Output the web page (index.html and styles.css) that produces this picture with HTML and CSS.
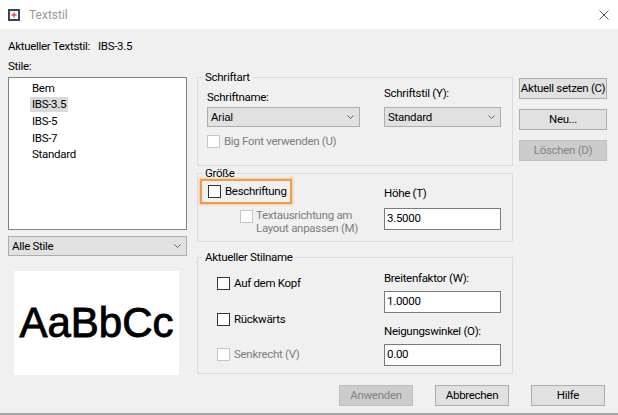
FILE: index.html
```html
<!DOCTYPE html>
<html lang="de">
<head>
<meta charset="utf-8">
<title>Textstil</title>
<link rel="stylesheet" href="styles.css">
</head>
<body>
<div class="titlebar">
  <svg class="appicon" width="12" height="12" viewBox="0 0 12 12"><rect x="1" y="1" width="10" height="10" fill="#fff" stroke="#34465a" stroke-width="2"/><path d="M6 3.5v5M3.5 6h5" stroke="#e2475a" stroke-width="1.4"/></svg>
  <span class="title">Textstil</span>
  <svg class="close" width="10" height="10" viewBox="0 0 10 10"><path d="M0.5 0.5L9.5 9.5M9.5 0.5L0.5 9.5" stroke="#5a5a5a" stroke-width="1"/></svg>
</div>
<div class="client">
  <div class="current"><span class="cur-lbl">Aktueller Textstil:</span><span>IBS-3.5</span></div>
  <div class="main">
    <div class="left">
      <div class="stile-lbl">Stile:</div>
      <div class="list">
        <div class="item"><span>Bem</span></div>
        <div class="item sel"><span>IBS-3.5</span></div>
        <div class="item"><span>IBS-5</span></div>
        <div class="item"><span>IBS-7</span></div>
        <div class="item"><span>Standard</span></div>
      </div>
      <div class="combo all"><span>Alle Stile</span><svg class="chev" width="7" height="4" viewBox="0 0 7 4"><path d="M0.5 0.5L3.5 3.5L6.5 0.5" fill="none" stroke="#606060" stroke-width="1"/></svg></div>
      <div class="preview">AaBbCc</div>
    </div>
    <div class="mid">
      <fieldset class="grp g1">
        <legend>Schriftart</legend>
        <div class="cols">
          <div class="col">
            <div class="lab lab-name">Schriftname:</div>
            <div class="combo c-name"><span>Arial</span><svg class="chev" width="7" height="4" viewBox="0 0 7 4"><path d="M0.5 0.5L3.5 3.5L6.5 0.5" fill="none" stroke="#606060" stroke-width="1"/></svg></div>
            <div class="check dis bigfont"><span class="box"></span><span>Big Font verwenden (U)</span></div>
          </div>
          <div class="col">
            <div class="lab">Schriftstil (Y):</div>
            <div class="combo c-stil"><span>Standard</span><svg class="chev" width="7" height="4" viewBox="0 0 7 4"><path d="M0.5 0.5L3.5 3.5L6.5 0.5" fill="none" stroke="#606060" stroke-width="1"/></svg></div>
          </div>
        </div>
      </fieldset>
      <fieldset class="grp g2">
        <legend>Größe</legend>
        <div class="cols">
          <div class="col">
            <div class="highlight"><div class="check"><span class="box"></span><span>Beschriftung</span></div></div>
            <div class="check dis multi"><span class="box"></span><span class="lines"><span class="ln">Textausrichtung am</span><span class="ln">Layout anpassen (M)</span></span></div>
          </div>
          <div class="col">
            <div class="lab lab-hoehe">Höhe (T)</div>
            <div class="inp inp-hoehe">3.5000</div>
          </div>
        </div>
      </fieldset>
      <fieldset class="grp g3">
        <legend>Aktueller Stilname</legend>
        <div class="cols">
          <div class="col col-checks">
            <div class="check r1"><span class="box"></span><span>Auf dem Kopf</span></div>
            <div class="check r2"><span class="box"></span><span>Rückwärts</span></div>
            <div class="check dis r3"><span class="box"></span><span>Senkrecht (V)</span></div>
          </div>
          <div class="col">
            <div class="lab lab-breite">Breitenfaktor (W):</div>
            <div class="inp inp-gap">1.0000</div>
            <div class="lab lab-neig">Neigungswinkel (O):</div>
            <div class="inp inp-gap">0.00</div>
          </div>
        </div>
      </fieldset>
    </div>
    <div class="right">
      <div class="btn side">Aktuell setzen (C)</div>
      <div class="btn side">Neu...</div>
      <div class="btn side disabled">Löschen (D)</div>
    </div>
  </div>
  <div class="footer">
    <div class="btn foot disabled">Anwenden</div>
    <div class="btn foot">Abbrechen</div>
    <div class="btn foot">Hilfe</div>
  </div>
</div>
</body>
</html>
```
FILE: styles.css
```css
html, body {
  margin: 0;
  padding: 0;
}
body {
  width: 618px;
  height: 415px;
  overflow: hidden;
  background: #f0f0f0;
  font-family: Roboto, "Liberation Sans", sans-serif;
  font-size: 11.5px;
  letter-spacing: -0.3px;
  color: #000;
}

/* title bar */
.titlebar {
  height: 29px;
  background: #fff;
  display: flex;
  align-items: center;
  padding-left: 8px;
  padding-right: 9px;
}
.appicon { flex: none; }
.title {
  margin-left: 9px;
  color: #9a9a9a;
  font-size: 12px;
  letter-spacing: 0;
}
.close { margin-left: auto; flex: none; }

/* client area */
.client {
  height: 375px;
  padding-top: 9px;
  border-bottom: 2px solid #a6a6a6;
  background: #f0f0f0;
}
.current {
  line-height: 16px;
  padding-left: 8px;
  display: flex;
}
.cur-lbl { width: 90px; flex: none; }

.main {
  margin-top: 4px;
  padding-left: 8px;
  display: flex;
  align-items: flex-start;
}

/* left column */
.left { width: 179px; flex: none; }
.stile-lbl { line-height: 16px; }
.list {
  margin-top: 3px;
  height: 153px;
  box-sizing: border-box;
  border: 1px solid #828282;
  background: #fff;
  padding: 2px 0 0 21px;
}
.item {
  height: 16.6px;
  display: flex;
  align-items: center;
}
.item span {
  line-height: 15px;
  padding: 0 2px;
}
.item.sel span { background: #dadada; }

.combo {
  height: 20px;
  box-sizing: border-box;
  border: 1px solid #adadad;
  background: #e1e1e1;
  display: flex;
  align-items: center;
  justify-content: space-between;
  padding: 0 5px 0 3px;
  white-space: nowrap;
}
.combo span { line-height: 16px; }
.chev { flex: none; }
.combo.all { margin-top: 6px; }
.c-name span { font-family: "Liberation Sans", Arial, sans-serif; letter-spacing: 0; font-size: 11px; }

.preview {
  margin: 15px 0 0 6px;
  width: 165px;
  height: 104px;
  background: #fff;
  display: flex;
  align-items: center;
  justify-content: center;
  font-family: "Liberation Sans", Arial, sans-serif;
  font-size: 42px;
  letter-spacing: 0;
  -webkit-text-stroke: 0.9px #000;
  padding-bottom: 1px;
  box-sizing: border-box;
}

/* middle column */
.mid {
  width: 316px;
  flex: none;
  margin-left: 10px;
  padding-top: 12px;
}
.grp {
  margin: 0;
  min-width: 0;
  border: 1px solid #dcdcdc;
  padding: 1px 11px 16px 9px;
}
.grp legend {
  padding: 0 2px;
  margin-left: -4px;
  line-height: 14px;
}
.cols {
  display: grid;
  grid-template-columns: 153px 117px;
  column-gap: 24px;
  align-items: start;
}
.col { display: flex; flex-direction: column; }
.lab { line-height: 16px; white-space: nowrap; }

.g1 .lab-name { margin-top: 4px; }
.g1 .c-name { margin-top: 2px; }
.g1 .c-stil { margin-top: 6px; }
.bigfont { margin-top: 6px; }

.check {
  display: flex;
  align-items: center;
  line-height: 16px;
  white-space: nowrap;
}
.box {
  width: 13px;
  height: 13px;
  box-sizing: border-box;
  border: 1px solid #333;
  background: #fff;
  margin-right: 4px;
  flex: none;
}
.dis { color: #7d7d7d; }
.dis .box { border-color: #c6c6c6; }

.g2 { padding-top: 0; padding-bottom: 6px; }
.highlight {
  margin: -1px 0 0 -7px;
  align-self: flex-start;
  border: 2px solid #f29a48;
  box-shadow: 0 0 2px 1px rgba(242, 154, 72, 0.45);
  padding: 2px 3px 3px 6px;
}
.multi {
  margin: 5px 0 0 33px;
  align-items: flex-start;
}
.multi .box { margin-right: 3px; margin-top: 1px; }
.lines { display: flex; flex-direction: column; }
.ln { line-height: 13px; }
.lab-hoehe { margin-top: 5px; }
.inp {
  height: 22px;
  box-sizing: border-box;
  border: 1px solid #7a7a7a;
  background: #fff;
  display: flex;
  align-items: center;
  padding: 0 0 2px 2px;
}
.inp-hoehe { margin-top: 7px; }

.g3 { margin-top: 8px; padding-top: 0; padding-bottom: 7px; }
.col-checks { padding-left: 10px; }
.r1 { margin-top: 11px; }
.r2 { margin-top: 20px; }
.r3 { margin-top: 19px; }
.lab-breite { margin-top: 6px; }
.lab-neig { margin-top: 10px; }
.inp-gap { margin-top: 5px; }

/* right column */
.right {
  width: 88px;
  flex: none;
  margin-left: 6px;
  padding-top: 20px;
  display: flex;
  flex-direction: column;
  gap: 10px;
}
.btn {
  height: 21px;
  box-sizing: border-box;
  border: 1px solid #adadad;
  background: #e1e1e1;
  display: flex;
  align-items: center;
  justify-content: center;
  white-space: nowrap;
  padding-bottom: 1px;
}
.btn.disabled {
  background: #cccccc;
  border-color: #bfbfbf;
  color: #838383;
}
.side { width: 88px; }

.footer {
  margin-top: 10px;
  display: flex;
  justify-content: flex-end;
  gap: 22px;
  padding-right: 13px;
}
.foot { width: 74px; }
```
